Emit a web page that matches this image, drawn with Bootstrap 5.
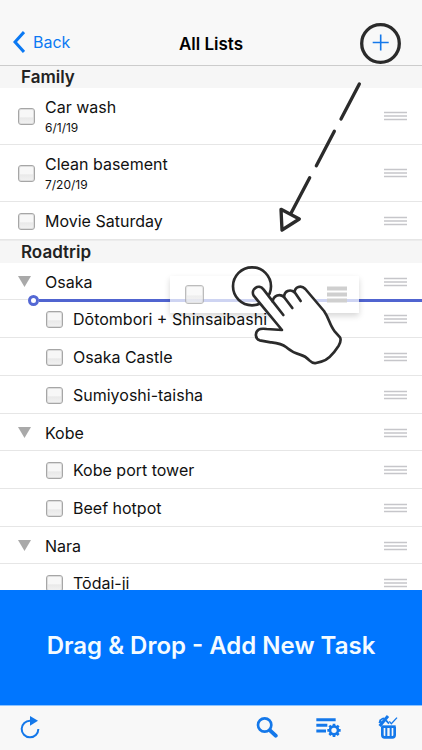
<!DOCTYPE html>
<html lang="en">
<head>
<meta charset="utf-8">
<meta name="viewport" content="width=device-width, initial-scale=1">
<title>All Lists</title>
<link rel="stylesheet" href="https://cdn.jsdelivr.net/npm/bootstrap@5.3.0/dist/css/bootstrap.min.css">
<style>
  body { font-family: Inter, "Liberation Sans", sans-serif; font-size: 16px; line-height: 20px; color: #111; background: #fff; }
  svg { display: block; }
  .top-bar { height: 66px; padding: 22px 21px 0 13px; background: #f8f8f8; border-bottom: 1px solid #ccc; }
  .bar-side { flex: 1 1 0; }
  .top-title { font-size: 17px; line-height: 20px; font-weight: 600; color: #000; margin: 0; padding-left: 8px; }
  .back-link { color: #0b79f3; }
  .plain-btn { border: 0; background: none; padding: 0; color: #1478ea; }
  .list-area { min-height: 0; }
  .section-head { height: 22px; padding: 0 21px; font-size: 17px; line-height: 22px; font-weight: 600; color: #222; background: #f6f6f6; margin: 0; }
  section + section .section-head { height: 23px; border-top: 1px solid #ececec; }
  .task-row { height: 38px; padding: 1px 15px 0 18px; border-bottom: 1px solid #e6e6e6; gap: 10px; }
  .task-row.dated { height: 57px; padding-top: 0; }
  .task-row.parent { height: 37px; gap: 14px; }
  .task-row.child-task { padding-left: 46px; }
  .task-row small { font-size: 12px; line-height: 16px; padding-top: 3px; }
  .tick { appearance: none; width: 17px; height: 17px; margin: 0; flex: none; border: 1px solid #a6a6a6; border-radius: 3px; background: linear-gradient(#f7f7f7 50%, #e9e9e9 60%, #f2f2f2); box-shadow: inset 0 0 0 1px #ddd; }
  .drop-line { position: absolute; left: 28px; right: 0; bottom: -7px; z-index: 1; display: flex; align-items: center; }
  .drop-line::before { content: ""; width: 11px; height: 11px; border: 3px solid #5468d4; border-radius: 50%; background: #fff; }
  .drop-line::after { content: ""; flex: 1; height: 3px; background: #5064d0; }
  .ghost-row { position: absolute; right: 63px; top: 13px; width: 189px; height: 37px; padding: 0 12px 0 15px; z-index: 2; background: rgba(255,255,255,.72); box-shadow: 0 3px 6px rgba(0,0,0,.16); }
  .ghost-row .tick { width: 19px; height: 19px; opacity: .75; }
  .hand-art { position: absolute; right: 0; top: -8px; z-index: 3; }
  .arrow-art { position: absolute; right: 0; top: -18px; z-index: 3; }
  .banner { height: 115px; background: #0076ff; color: #f4fbff; font-size: 24px; line-height: 30px; font-weight: 600; padding-bottom: 4px; }
  .tool-bar { height: 45px; padding: 0 24px 0 20px; background: #f8f8f8; border-top: 1px solid #8cc3ff; }
  .tools-right { gap: 37px; }
</style>
<script src="https://cdn.jsdelivr.net/npm/bootstrap@5.3.0/dist/js/bootstrap.bundle.min.js"></script>
</head>
<body>
<svg width="0" height="0" class="position-absolute" aria-hidden="true">
  <symbol id="grip" viewBox="0 0 23 10"><path d="M0 1.500h23M0 5h23M0 8.500h23" stroke="#c6c6ca" stroke-width="1.400"/></symbol>
  <symbol id="fold" viewBox="0 0 13 11"><path d="M0 0h13L6.500 11z" fill="#a9a9a9"/></symbol>
</svg>
<div class="d-flex flex-column vh-100 overflow-hidden">
  <header class="top-bar d-flex align-items-center flex-shrink-0">
    <div class="bar-side"><a href="#" class="back-link d-inline-flex align-items-center gap-2 text-decoration-none">
      <svg width="12" height="22" viewBox="0 0 12 22" fill="none" stroke="#0b79f3" stroke-width="3"><path d="M11 1 2 11l9 10"/></svg>Back</a></div>
    <h1 class="top-title text-center">All Lists</h1>
    <div class="bar-side d-flex justify-content-end"><button class="plain-btn" aria-label="Add task">
      <svg width="41" height="41" viewBox="0 0 41 41" fill="none"><circle cx="20.500" cy="20.500" r="18.800" stroke="#2b2b2b" stroke-width="3.300"/><path d="M12.700 19.500h16M20.700 11.500v16" stroke="#1478ea" stroke-width="1.600"/></svg></button></div>
  </header>

  <main class="list-area flex-fill overflow-hidden">
    <section>
      <h2 class="section-head">Family</h2>
      <div class="position-relative">
        <div class="task-row dated d-flex align-items-center">
          <input class="tick" type="checkbox" id="t1"><label class="flex-fill" for="t1">Car wash<small class="d-block">6/1/19</small></label>
          <svg width="23" height="10"><use href="#grip"/></svg>
        </div>
        <div class="task-row dated d-flex align-items-center">
          <input class="tick" type="checkbox" id="t2"><label class="flex-fill" for="t2">Clean basement<small class="d-block">7/20/19</small></label>
          <svg width="23" height="10"><use href="#grip"/></svg>
        </div>
        <div class="task-row d-flex align-items-center">
          <input class="tick" type="checkbox" id="t3"><label class="flex-fill" for="t3">Movie Saturday</label>
          <svg width="23" height="10"><use href="#grip"/></svg>
        </div>
        <svg class="arrow-art pe-none" width="211" height="170" viewBox="0 0 633 510" fill="none" stroke="#2b2b2b" stroke-width="10" stroke-linecap="round" stroke-linejoin="round"><path d="M445 42 390 147M370 184 316 287M296 323 240 430"/><path d="M210 418 265 447 213 480z" fill="#fff"/></svg>
      </div>
    </section>
    <section>
      <h2 class="section-head">Roadtrip</h2>
      <div class="position-relative">
        <div class="task-row parent d-flex align-items-center position-relative">
          <svg width="13" height="11"><use href="#fold"/></svg><span class="flex-fill">Osaka</span>
          <svg width="23" height="10"><use href="#grip"/></svg>
          <div class="drop-line"></div>
        </div>
        <div class="task-row child-task d-flex align-items-center">
          <input class="tick" type="checkbox" id="t4"><label class="flex-fill" for="t4">Dōtombori + Shinsaibashi</label>
          <svg width="23" height="10"><use href="#grip"/></svg>
        </div>
        <div class="task-row child-task d-flex align-items-center">
          <input class="tick" type="checkbox" id="t5"><label class="flex-fill" for="t5">Osaka Castle</label>
          <svg width="23" height="10"><use href="#grip"/></svg>
        </div>
        <div class="task-row child-task d-flex align-items-center">
          <input class="tick" type="checkbox" id="t6"><label class="flex-fill" for="t6">Sumiyoshi-taisha</label>
          <svg width="23" height="10"><use href="#grip"/></svg>
        </div>
        <div class="task-row parent d-flex align-items-center">
          <svg width="13" height="11"><use href="#fold"/></svg><span class="flex-fill">Kobe</span>
          <svg width="23" height="10"><use href="#grip"/></svg>
        </div>
        <div class="task-row child-task d-flex align-items-center">
          <input class="tick" type="checkbox" id="t7"><label class="flex-fill" for="t7">Kobe port tower</label>
          <svg width="23" height="10"><use href="#grip"/></svg>
        </div>
        <div class="task-row child-task d-flex align-items-center">
          <input class="tick" type="checkbox" id="t8"><label class="flex-fill" for="t8">Beef hotpot</label>
          <svg width="23" height="10"><use href="#grip"/></svg>
        </div>
        <div class="task-row parent d-flex align-items-center">
          <svg width="13" height="11"><use href="#fold"/></svg><span class="flex-fill">Nara</span>
          <svg width="23" height="10"><use href="#grip"/></svg>
        </div>
        <div class="task-row child-task d-flex align-items-center">
          <input class="tick" type="checkbox" id="t9"><label class="flex-fill" for="t9">Tōdai-ji</label>
          <svg width="23" height="10"><use href="#grip"/></svg>
        </div>

        <div class="ghost-row d-flex align-items-center justify-content-between">
          <input class="tick" type="checkbox" aria-label="New task">
          <svg width="20" height="18" viewBox="0 0 20 18"><path d="M0 2.500h20M0 8.500h20M0 14.500h20" stroke="#cfcfcf" stroke-width="4"/></svg>
        </div>
        <svg class="hand-art pe-none" width="262" height="130" viewBox="0 0 786 390" fill="none" stroke="#2b2b2b" stroke-width="8" stroke-linecap="round" stroke-linejoin="round">
          <circle cx="276" cy="94" r="57"/>
          <path fill="#fff" d="M366 225 281 122C271 103 296 84 311 104L338 139C341 120 360 115 372 126C373 108 390 101 404 112C404 96 423 89 436 102L492 168C507 189 509 211 524 229L540 247C545 256 541 263 536 272C520 297 504 315 484 320L468 324C459 326 454 322 449 317C440 307 432 302 420 299C398 294 391 287 379 277C364 265 350 264 332 262L299 256C285 251 284 232 296 224C302 220 311 221 320 222Z"/>
          <path d="M338 139 370 180M372 126 397 159M404 112 422 138"/>
        </svg>
      </div>
    </section>
  </main>

  <div class="banner d-flex align-items-center justify-content-center flex-shrink-0">Drag &amp; Drop - Add New Task</div>

  <footer class="tool-bar d-flex align-items-center justify-content-between flex-shrink-0">
    <button class="plain-btn" aria-label="Refresh">
      <svg width="20" height="24" viewBox="0 0 60 72" fill="none" stroke="currentColor" stroke-width="6"><path d="M31 14A25 25 0 1 0 55 39"/><path d="M30 0 54 14 30 29z" fill="currentColor" stroke="none"/></svg></button>
    <div class="tools-right d-flex align-items-center">
      <button class="plain-btn" aria-label="Search">
        <svg width="22" height="22" viewBox="0 0 66 66" fill="none" stroke="currentColor"><circle cx="26" cy="24" r="20" stroke-width="8"/><path d="M42 40 59 56" stroke-width="12" stroke-linecap="round"/></svg></button>
      <button class="plain-btn" aria-label="List settings">
        <svg width="26" height="22" viewBox="0 0 78 66" fill="none" stroke="currentColor"><path d="M4 8H62M4 25H37M4 42H33" stroke-width="9"/><circle cx="57" cy="40" r="12" stroke-width="8"/><path d="M57 20v8M57 52v8M37 40h8M69 40h8M43 26l6 6M65 48l6 6M43 54l6-6M65 32l6-6" stroke-width="8"/></svg></button>
      <button class="plain-btn" aria-label="Delete completed">
        <svg width="20" height="26" viewBox="0 0 60 78" fill="none" stroke="currentColor"><path d="M10 35H53" stroke-width="8"/><path d="M13 35V60Q13 67 20 67H43Q50 67 50 60V35" stroke-width="8"/><path d="M25 37V66M38 37V66" stroke-width="6"/><path d="M5 33 30 3" stroke-width="9"/><path d="M4 24C6 14 14 10 19 10M12 26 5 14M24 16 33 26" stroke-width="5"/><path d="M34 19 40 26 57 8" stroke-width="4"/></svg></button>
    </div>
  </footer>
</div>
</body>
</html>
